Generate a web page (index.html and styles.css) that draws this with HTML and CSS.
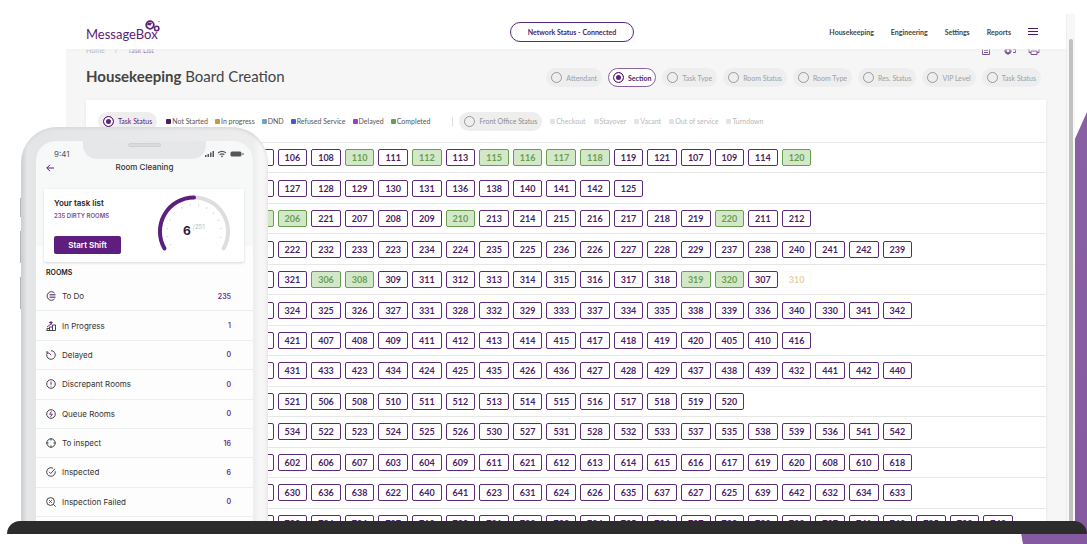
FILE: index.html
```html
<!DOCTYPE html>
<html lang="en">
<head>
<meta charset="utf-8">
<meta name="viewport" content="width=device-width, initial-scale=1">
<title>Housekeeping Board Creation</title>
<link rel="stylesheet" href="styles.css">
</head>
<body>
<div class="stage">
  <svg class="accent" viewBox="0 0 66 432" aria-hidden="true"><defs><linearGradient id="pg" x1="0" y1="0" x2="0" y2="1"><stop offset="0" stop-color="#8a60a4"/><stop offset="1" stop-color="#8559a0"/></linearGradient></defs><path fill="url(#pg)" d="M66 0L53 29V421H0L2 432H66Z"/></svg>

  <div class="screen">
    <div class="app">
      <header class="topbar">
        <a class="logo" href="#" aria-label="MessageBox"><span>MessageBox</span>
          <svg class="logo-mark" viewBox="0 0 18 14" aria-hidden="true"><circle cx="6" cy="5" r="3.800" fill="none" stroke="#5b2275" stroke-width="1.800"/><path d="M3 5Q4 1.500 8 3L6.500 5.500Z" fill="#5b2275"/><circle cx="12.700" cy="8.500" r="2.200" fill="none" stroke="#5b2275" stroke-width="1.500"/><circle cx="15" cy="1.500" r=".5" fill="#5b2275"/></svg>
        </a>
        <button class="network" type="button">Network Status - Connected</button>
        <nav class="nav">
          <a href="#">Housekeeping</a><a href="#">Engineering</a><a href="#">Settings</a><a href="#">Reports</a>
          <button class="menu" type="button" aria-label="Menu"><svg viewBox="0 0 10 7" aria-hidden="true"><path d="M0 .5H10M0 3.500H10M0 6.500H10" stroke="#4c1d66"/></svg></button>
        </nav>
      </header>
      <main class="content">
        <div class="crumbs">
          <nav class="trail"><a href="#">Home</a><span>/</span><a class="here" href="#">Task List</a></nav>
          <div class="tools">
            <button type="button" aria-label="List"><svg viewBox="0 0 12 14"><path d="M2.500 1V13.500H9.500V1M4 9.500H8M4 11.500H8" /></svg></button>
            <button type="button" aria-label="Assign"><svg viewBox="0 0 12 14"><circle cx="4" cy="10" r="2.200" stroke-width="2"/><path d="M0 10H2M4 12V14M6 10H8M9 8.500H11.500V11.500H9"/></svg></button>
            <button type="button" aria-label="Print"><svg viewBox="0 0 12 14"><path d="M3 11.500H1V7H11V11.500H9M3 10H9V13.500H3Z"/></svg></button>
          </div>
        </div>
        <div class="heading">
          <h1><b>Housekeeping</b> Board Creation</h1>
          <div class="views">
            <label class="chip"><input type="radio" name="view">Attendant</label>
            <label class="chip active"><input type="radio" name="view" checked>Section</label>
            <label class="chip"><input type="radio" name="view">Task Type</label>
            <label class="chip"><input type="radio" name="view">Room Status</label>
            <label class="chip"><input type="radio" name="view">Room Type</label>
            <label class="chip"><input type="radio" name="view">Res. Status</label>
            <label class="chip"><input type="radio" name="view">VIP Level</label>
            <label class="chip"><input type="radio" name="view">Task Status</label>
          </div>
        </div>
        <section class="board">
          <div class="filters">
            <label class="chip picked"><input type="radio" name="filter" checked>Task Status</label>
            <ul class="legend">
              <li class="k-start">Not Started</li><li class="k-prog">In progress</li><li class="k-dnd">DND</li><li class="k-ref">Refused Service</li><li class="k-delay">Delayed</li><li class="k-done">Completed</li>
            </ul>
            <span class="divider"></span>
            <label class="chip office"><input type="radio" name="filter">Front Office Status</label>
            <ul class="legend muted">
              <li>Checkout</li><li>Stayover</li><li>Vacant</li><li>Out of service</li><li>Turndown</li>
            </ul>
          </div>
          <div class="rows" id="rows"></div>
        </section>
      </main>
    </div>
    <div class="scroll"><div class="thumb"></div></div>
  </div>

  <div class="phone">
    <div class="side"><i></i><i></i><i></i></div>
    <div class="display">
      <div class="notch"><span></span></div>
      <div class="status"><span>9:41</span>
        <svg viewBox="0 0 40 8" aria-hidden="true"><g fill="#55555c"><rect x="1" y="5" width="1.500" height="2"/><rect x="3.500" y="4" width="1.500" height="3"/><rect x="6" y="2.500" width="1.500" height="4.500"/><rect x="8.500" y="1" width="1.500" height="6"/><rect x="26.500" y="1.500" width="11" height="5" rx="1.500"/><rect x="38.500" y="3" width="1" height="2"/><circle cx="18" cy="6.300" r=".9"/></g><path d="M14 3Q18-.2 22 3M15.700 4.800Q18 3 20.300 4.800" fill="none" stroke="#55555c" stroke-width="1.100"/></svg>
      </div>
      <div class="phead"><button type="button" aria-label="Back"><svg viewBox="0 0 8 8"><path d="M8 4H.8M4 .8L.8 4L4 7.200" fill="none" stroke="#5e1e7d"/></svg></button><h2>Room Cleaning</h2></div>
      <div class="card">
        <div class="info"><h3>Your task list</h3><p>235 DIRTY ROOMS</p><button type="button">Start Shift</button></div>
        <div class="gauge">
          <svg viewBox="0 0 74 58" aria-hidden="true"><g fill="none" stroke-width="4" stroke-linecap="round"><path d="M37 3.500A34 34 0 0 1 66.500 54.500" stroke="#dededf"/><path d="M7.500 54.500A34 34 0 0 1 37 3.500" stroke="#5e1e7d"/></g><path d="M13.440 51.120A27 27 0 1 1 60.560 51.120" fill="none" stroke="#c8c8cc" stroke-width="2" stroke-dasharray=".7 7.900"/></svg>
          <p><b>6</b><span>/251</span></p>
        </div>
      </div>
      <h4>ROOMS</h4>
      <ul class="tasks">
        <li><svg viewBox="0 0 10 10"><path d="M8.500 2A4.300 4.300 0 1 0 8.500 8"/><path class="v" d="M3.500 3.500H9.500M3.500 5H9.500M3.500 6.500H9.500" stroke-width=".8"/></svg><a href="#">To Do</a><b>235</b></li>
        <li><svg viewBox="0 0 10 10"><path d="M.5 9.500H9.500V4H6.500V9.500M6.500 6H3.500V9.500M3.500 7.500H1V9.500"/><path class="v" d="M5 0V4M1 6L5 3L6.500 1.500M3 1.500H6.500"/></svg><a href="#">In Progress</a><b>1</b></li>
        <li><svg viewBox="0 0 10 10"><path d="M5 .7A4.300 4.300 0 1 1 1.300 2.800M1 1V3H3"/><path class="v" d="M3 3L5.200 5.200"/></svg><a href="#">Delayed</a><b>0</b></li>
        <li><svg viewBox="0 0 10 10"><circle cx="5" cy="5" r="4.300"/><path class="v" d="M5 2.500V5.800M5 6.800V7.600"/></svg><a href="#">Discrepant Rooms</a><b>0</b></li>
        <li><svg viewBox="0 0 10 10"><circle cx="5" cy="5" r="4.300"/><path class="v" d="M5.500 2.300L3.700 5.200H6.300L4.500 7.800"/></svg><a href="#">Queue Rooms</a><b>0</b></li>
        <li><svg viewBox="0 0 10 10"><circle cx="5" cy="5" r="4.200"/><path d="M5 .2V2.500M5 7.500V9.800M.2 5H2.500M7.500 5H9.800"/></svg><a href="#">To inspect</a><b>16</b></li>
        <li><svg viewBox="0 0 10 10"><path d="M9.200 4.200A4.300 4.300 0 1 1 7 1.200"/><path class="v" d="M3 4.800L4.700 6.500L9 1.800"/></svg><a href="#">Inspected</a><b>6</b></li>
        <li><svg viewBox="0 0 10 10"><circle cx="4.500" cy="4.500" r="3.900"/><path d="M7.300 7.300L9.700 9.700"/><path class="v" d="M3.200 3.200L5.800 5.800M5.800 3.200L3.200 5.800"/></svg><a href="#">Inspection Failed</a><b>0</b></li>
      </ul>
    </div>
  </div>
  <div class="base"></div>
</div>
<script src="app.js"></script>
</body>
</html>
```

FILE: styles.css
```css
* { box-sizing: border-box; }
body { margin: 0; background: #fff; font-family: Lato, "Liberation Sans", sans-serif; color: #444; }
h1, h2, h3, h4, p, ul { margin: 0; padding: 0; }
ul { list-style: none; }
a { color: inherit; text-decoration: none; }
button { font: inherit; color: inherit; border: 0; background: none; padding: 0; cursor: pointer; }
svg { display: block; }

.stage { position: relative; display: flex; flex-direction: column; height: 100vh; padding: 14px 0 10px; overflow: hidden; }
.accent { position: absolute; right: 0; bottom: 0; width: 66px; height: 432px; }
.screen { position: relative; flex: 1; min-height: 0; display: flex; margin: 0 12px 0 66px; overflow: hidden; background: #f6f6f6; }
.app { flex: 1; min-width: 0; display: flex; flex-direction: column; }
.scroll { width: 9px; padding: 25px 2px 0 2px; background: #f6f8f8; border-left: 1px solid #ececec; display: flex; }
.thumb { flex: 1; background: #c1c1c1; border-radius: 2px 2px 0 0; }

.topbar { position: relative; flex: none; display: grid; grid-template-columns: 1fr auto 1fr; align-items: center; height: 35px; padding: 0 28px 0 20px; background: #fff; box-shadow: 0 1px 3px #eef2f2; }
.logo { display: flex; align-items: center; position: relative; font-size: 13px; font-weight: 400; line-height: 20px; color: #5b2275; padding-top: 4px; }
.logo-mark { position: absolute; left: 58px; top: 0; width: 18px; height: 14px; }
.network { height: 20px; margin-left: 20px; padding: 0 17px; border: 1px solid #5b2b78; border-radius: 10px; font-size: 7px; font-weight: 700; color: #4c1d66; }
.nav { display: flex; justify-content: flex-end; align-items: center; gap: 17px; font-size: 7px; font-weight: 700; }
.menu svg { width: 10px; height: 7px; }

.content { flex: 1; min-height: 0; display: flex; flex-direction: column; padding: 0 20px; }
.crumbs { flex: none; display: flex; justify-content: space-between; height: 14px; margin-top: -8px; padding-right: 6px; font-size: 7px; line-height: 18px; color: #aaa; }
.trail { display: flex; gap: 10px; }
.here { color: #9a6fb3; }
.tools { display: flex; gap: 12px; }
.tools svg { width: 12px; height: 14px; fill: none; stroke: #7d4f98; }
.heading { flex: none; display: flex; justify-content: space-between; align-items: center; height: 45px; padding-right: 5px; }
h1 { padding-bottom: 4px; font-size: 15px; line-height: 20px; font-weight: 400; color: #444; }
.views { display: flex; gap: 6px; }
.chip { display: flex; align-items: center; gap: 4px; height: 19px; padding: 0 5px; border-radius: 10px; background: #eeeeee; color: #a0a0a0; font-size: 7px; white-space: nowrap; }
.chip input { appearance: none; width: 11px; height: 11px; margin: 0; border: 1px solid #999; border-radius: 50%; }
.chip input:checked { border-color: #5b2275; background: #5b2275; box-shadow: inset 0 0 0 2px #fff; }
.chip.active { padding: 0 4px; background: #fff; border: 1px solid #8a5fa3; color: #4c1d66; font-weight: 700; }
.chip.picked { color: #5b2275; }
.chip.office { color: #8c8c8c; }

.board { flex: none; background: #fff; box-shadow: 0 1px 3px #e4e4e4; }
.filters { display: flex; align-items: center; height: 42px; padding-left: 12px; }
.legend { display: flex; gap: 7px; margin-left: 9px; font-size: 7px; color: #555; white-space: nowrap; }
.legend li { display: flex; align-items: center; gap: 1px; }
.legend li::before { content: ""; width: 5px; height: 5px; border-radius: 1px; background: #e4e4e4; }
.legend.muted { gap: 8px; margin-left: 8px; color: #b8b8b8; }
.legend .k-start::before { background: #4c1d66; }
.legend .k-prog::before { background: #c49a3a; }
.legend .k-dnd::before { background: #6da3c4; }
.legend .k-ref::before { background: #4a57cf; }
.legend .k-delay::before { background: #9a3fc4; }
.legend .k-done::before { background: #6a9e4f; }
.divider { width: 1px; height: 9px; margin: 0 6px 0 22px; background: #ddd; }
.rows { display: grid; grid-template-rows: repeat(13, 1fr); height: 396px; }
.row { display: grid; grid-template-columns: repeat(23, 1fr); column-gap: 4px; align-items: center; padding: 0 33px 0 158px; border-top: 1px solid #e6e6e6; }
.room { height: 17px; border: 1px solid #5b2b78; border-radius: 2px; background: #fff; font-size: 9px; line-height: 15px; font-weight: 700; color: #4c1d66; text-align: center; }
.room.done { background: #d3e8c9; border-color: #6a9e4f; color: #6a9e4f; }
.room.faint { border-color: #fdfaf2; color: #e3d3a4; }

.phone { position: absolute; left: 21px; top: 127px; bottom: 23px; width: 247px; padding: 14px 15px 0; border-radius: 36px 36px 0 0; background: linear-gradient(90deg, #c9cacc 0, #e6e7e9 6px, #e4e5e7 14px, #ededee 232px, #f8f8f8 240px, #f1f1f1 100%); box-shadow: inset 0 2px 3px #d9dadc; }
.side { position: absolute; left: -1px; top: 71px; display: grid; gap: 14px; }
.side i { width: 1px; height: 32px; background: #b4b6b8; }
.side i:first-child { height: 19px; }
.display { position: relative; height: 100%; overflow: hidden; border-radius: 20px 20px 0 0; background: linear-gradient(#f7f8f8 0 105px, #fdfdfd 105px); font-family: Inter, "Liberation Sans", sans-serif; color: #333; }
.notch { position: absolute; left: 47px; top: 0; width: 123px; height: 18px; padding: 2px 45px; border-radius: 0 0 14px 14px; background: #e6e7e8; }
.notch span { display: block; height: 4px; border-radius: 2px; background: #dadbdd; border: 1px solid #d0d1d3; }
.status { display: flex; justify-content: space-between; align-items: center; height: 21px; padding: 4px 9px 0 18px; font-size: 8px; color: #55555c; }
.status svg { width: 40px; height: 8px; }
.phead { display: grid; grid-template-columns: 8px 1fr 8px; align-items: start; height: 27px; padding: 0 10px; }
.phead svg { width: 8px; height: 8px; margin-top: 2px; }
.phead h2 { font-size: 8px; line-height: 10px; font-weight: 500; text-align: center; }
.card { display: flex; justify-content: space-between; height: 73px; margin: 0 9px 0 8px; padding: 5px 13px 0 10px; background: #fff; border-radius: 2px; box-shadow: 0 1px 3px #d8d8d8; }
.info h3 { margin-top: 4px; font-size: 8px; line-height: 10px; font-weight: 600; color: #222; }
.info p { margin-top: 3px; font-size: 6px; line-height: 10px; font-weight: 600; color: #7d4f98; }
.info button { width: 67px; height: 18px; margin-top: 15px; border-radius: 2px; background: #5e1e7d; color: #fff; font-size: 8px; font-weight: 600; }
.gauge { display: grid; }
.gauge > * { grid-area: 1 / 1; }
.gauge svg { width: 74px; height: 58px; }
.gauge p { display: flex; gap: 2px; padding: 29px 0 0 26px; line-height: 16px; }
.gauge b { font-size: 12px; color: #2b1a33; }
.gauge span { font-size: 6px; line-height: 8px; color: #bbb; }
h4 { margin: 6px 10px 0; font-size: 7px; line-height: 10px; font-weight: 600; color: #222; }
.tasks { display: grid; grid-template-rows: repeat(8, 1fr); height: 235px; margin-top: 4px; font-size: 8px; }
.tasks li { display: grid; grid-template-columns: 10px 1fr auto; align-items: center; column-gap: 6px; padding: 0 22px 0 10px; border-bottom: 1px solid #ebeeee; }
.tasks svg { width: 10px; height: 10px; fill: none; stroke: #444; }
.tasks .v { stroke: #6b2f8a; }
.tasks b { font-size: 7px; font-weight: 600; color: #6b2f8a; }

.base { position: relative; flex: none; height: 13px; margin-left: 7px; border-radius: 13px 13px 0 0; background: #2c2c2c; }
```

FILE: app.js
```js
const sections = [
  "106 108 110* 111 112* 113 115* 116* 117* 118* 119 121 107 109 114 120*",
  "127 128 129 130 131 136 138 140 141 142 125",
  "206* 221 207 208 209 210* 213 214 215 216 217 218 219 220* 211 212",
  "222 232 233 223 234 224 235 225 236 226 227 228 229 237 238 240 241 242 239",
  "321 306* 308* 309 311 312 313 314 315 316 317 318 319* 320* 307 310~",
  "324 325 326 327 331 328 332 329 333 337 334 335 338 339 336 340 330 341 342",
  "421 407 408 409 411 412 413 414 415 417 418 419 420 405 410 416",
  "431 433 423 434 424 425 435 426 436 427 428 429 437 438 439 432 441 442 440",
  "521 506 508 510 511 512 513 514 515 516 517 518 519 520",
  "534 522 523 524 525 526 530 527 531 528 532 533 537 535 538 539 536 541 542",
  "602 606 607 603 604 609 611 621 612 613 614 615 616 617 619 620 608 610 618",
  "630 636 638 622 640 641 623 631 624 626 635 637 627 625 639 642 632 634 633",
  "702 704 706 707 710 709 721 722 723 724 725 726 727 730 729 732 737 741 742 735 733 743"
];
const rows = document.getElementById("rows");
sections.forEach((section, index) => {
  const row = document.createElement("div");
  row.className = "row";
  const first = document.createElement("button");
  first.type = "button";
  first.className = index === 2 ? "room done" : "room";
  first.setAttribute("aria-label", "Section");
  row.append(first);
  section.split(" ").forEach((entry) => {
    const room = document.createElement("button");
    room.type = "button";
    room.className = "room" + (entry.endsWith("*") ? " done" : entry.endsWith("~") ? " faint" : "");
    room.textContent = entry.slice(0, 3);
    row.append(room);
  });
  rows.append(row);
});
```
